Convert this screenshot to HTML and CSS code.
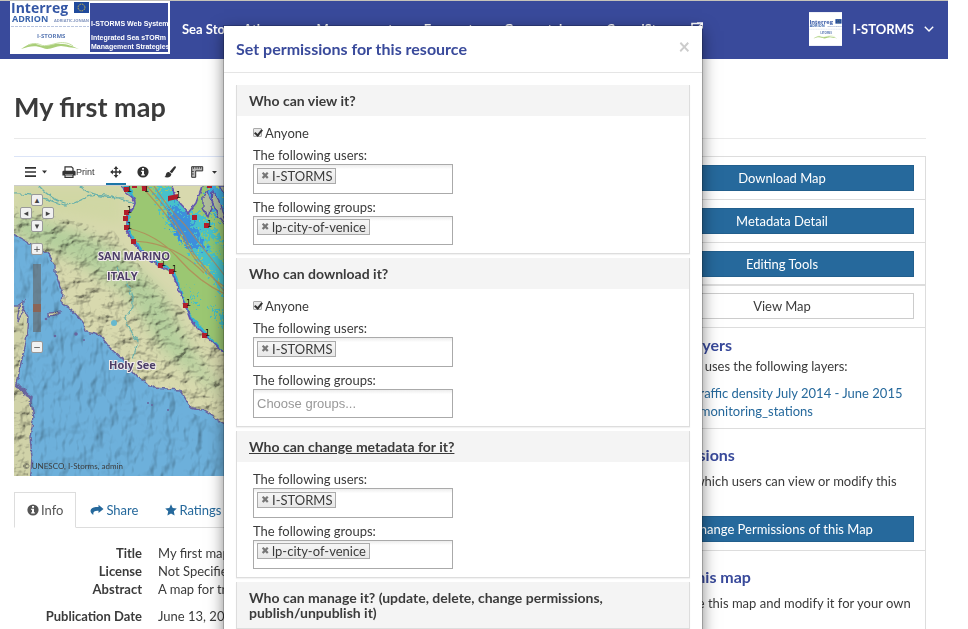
FILE: index.html
```html
<!DOCTYPE html>
<html lang="en">
<head>
<meta charset="utf-8">
<title>My first map</title>
<link rel="stylesheet" href="styles.css">
</head>
<body>
<svg class="sprite" aria-hidden="true">
  <symbol id="i-info" viewBox="0 0 12 12"><circle cx="6" cy="6" r="5.6" fill="currentColor"/><path d="M5 2h2v1.7H5zM4.2 4.7H7v3.6h.8v1.3H4.2V8.3H5V6h-.8z" fill="#fff"/></symbol>
  <symbol id="i-chev" viewBox="0 0 10 6"><path d="M.8.800L5 5 9.200.800" fill="none" stroke="currentColor" stroke-width="1.400"/></symbol>
  <symbol id="i-logo" viewBox="0 0 80 52">
    <rect width="80" height="52" fill="#fff"/>
    <text x="1" y="12" font-size="14" font-weight="700" fill="#3557a5">Interreg</text>
    <rect x="64" y="1" width="15" height="11" fill="#204a9c"/>
    <circle cx="71.500" cy="6.500" r="3.400" fill="none" stroke="#e9c93c" stroke-width="1" stroke-dasharray="1 .78"/>
    <text x="2" y="21" font-size="9" fill="#3b65ad">ADRION</text>
    <text x="44" y="21" font-size="4" fill="#8093bd">ADRIATIC-IONIAN</text>
    <path d="M1 25.500h78" stroke="#b9c5df" stroke-width="1" stroke-dasharray="3 1"/>
    <text x="27" y="37" font-size="6" fill="#5a79b4">I-STORMS</text>
    <path d="M11 48c6-4 11-7 18-4 8 3 14-2 21-1 8 0 12 2 19 5-8-2-13-2-18-3-6 0-12 5-18 2-8-3-13-2-22 1z" fill="#a9ce78"/>
    <path d="M18 44c5-2 9-2 13 0s12-1 17-2c6-1 11 0 15 3" fill="none" stroke="#c5dfa0"/>
  </symbol>
</svg>

<header class="topbar">
  <a class="brand" href="#" aria-label="I-STORMS Web System">
    <svg class="brand-logo" viewBox="0 0 80 52"><use href="#i-logo"/></svg>
    <span class="brand-text"><span>I-STORMS Web System</span><span>Integrated Sea sTORm<br>Management Strategies</span></span>
  </a>
  <nav class="menu">
    <a href="#">Sea Storm Atlas <svg class="chev" viewBox="0 0 10 6"><use href="#i-chev"/></svg></a>
    <a href="#">Management</a>
    <a href="#">Forecast</a>
    <a href="#">Geoportal <svg class="chev" viewBox="0 0 10 6"><use href="#i-chev"/></svg></a>
    <a href="#">CrowdStorms
      <svg class="ext" viewBox="0 0 12 12"><path d="M8.500 1.500H1v9.500h9V7M6 1h5.500v5.500M11 1.500L5 7.500" fill="none" stroke="currentColor" stroke-width="1.600"/></svg>
    </a>
  </nav>
  <a class="account" href="#">
    <svg class="avatar" viewBox="0 0 80 82"><rect width="80" height="82" fill="#fff"/><use href="#i-logo" y="16" width="80" height="52"/></svg>
    <span>I-STORMS</span>
    <svg class="chev" viewBox="0 0 10 6"><use href="#i-chev"/></svg>
  </a>
</header>

<main class="page">
  <h1>My first map</h1>
  <div class="columns">
    <div class="primary">
      <section class="viewer">
        <div class="toolbar">
          <button class="tool" aria-label="Layers"><svg viewBox="0 0 22 12"><path d="M0 1.800h11M0 6h11M0 10.200h11" stroke="currentColor" stroke-width="1.700"/><path d="M17 4.500h5L19.500 7.500z" fill="currentColor"/></svg></button>
          <button class="tool"><svg viewBox="0 0 14 12"><path d="M3 5V.800h6.500L11 2.300V5M3 9v2.400h8V9z" fill="#fff" stroke="currentColor" stroke-width="1.200"/><path d="M1.600 4.700h10.800q1.200 0 1.200 1.200v3.600H11V8.200H3v1.300H.4V5.900q0-1.200 1.200-1.200z" fill="currentColor"/></svg>Print</button>
          <button class="tool active" aria-label="Pan"><svg viewBox="0 0 14 14"><path d="M7 1v12M1 7h12" stroke="currentColor" stroke-width="1.700"/><path d="M7 .400l2.800 3H4.200zM7 13.600l2.800-3H4.200zM.4 7l3-2.800v5.600zM13.600 7l-3-2.800v5.600z" fill="currentColor"/></svg></button>
          <button class="tool" aria-label="Identify"><svg viewBox="0 0 12 12"><use href="#i-info"/></svg></button>
          <button class="tool" aria-label="Draw"><svg viewBox="0 0 14 14"><path d="M13.300.400q1 .6.300 2L9.300 8.600 6.500 6.600 11.600.900q.8-.9 1.700-.5zM5.800 7.100l2.800 2.200c0 3-3.200 5-8.300 3.500 2.400-.8 1.400-2.700 2.500-4.300.8-1.200 2-1.400 3-1.400z" fill="currentColor"/></svg></button>
          <button class="tool" aria-label="Measure"><svg viewBox="0 0 26 12"><path d="M.7.700h11v4.200h-7v6.400h-4z" fill="#bbb" stroke="currentColor" stroke-width="1"/><path d="M2.500 1v1.800M5 1v1.800M7.300 1v1.800M9.600 1v1.800M1 5.500h1.800M1 8h1.800" stroke="currentColor" stroke-width=".8"/><path d="M21 5h5l-2.500 2.800z" fill="currentColor"/></svg></button>
        </div>
        <div class="map">
          <svg class="terrain" viewBox="0 0 600 290" preserveAspectRatio="xMinYMin slice">
            <defs>
              <filter id="relief" x="0" y="0" width="100%" height="100%">
                <feTurbulence type="fractalNoise" baseFrequency=".07 .09" numOctaves="4" seed="8"/>
                <feDiffuseLighting surfaceScale="9" diffuseConstant="1.250" lighting-color="#fff"><feDistantLight azimuth="225" elevation="55"/></feDiffuseLighting>
                <feComposite in2="SourceGraphic" operator="in"/>
                <feGaussianBlur stdDeviation=".4"/>
              </filter>
              <filter id="swell" x="0" y="0" width="100%" height="100%">
                <feTurbulence type="fractalNoise" baseFrequency=".07 .04" numOctaves="3" seed="4"/>
                <feDiffuseLighting surfaceScale="9" diffuseConstant="1.200" lighting-color="#fff"><feDistantLight azimuth="225" elevation="57"/></feDiffuseLighting>
                <feComposite in2="SourceGraphic" operator="in"/>
                <feGaussianBlur stdDeviation=".6"/>
              </filter>
              <filter id="grain" x="-20%" y="-20%" width="140%" height="140%">
                <feTurbulence type="fractalNoise" baseFrequency=".3" numOctaves="3" seed="3" result="n"/>
                <feDisplacementMap in="SourceGraphic" in2="n" scale="26" xChannelSelector="R" yChannelSelector="G"/>
              </filter>
              <filter id="rough"><feTurbulence type="fractalNoise" baseFrequency=".18" numOctaves="2" seed="6"/><feDisplacementMap in="SourceGraphic" scale="5" xChannelSelector="R" yChannelSelector="G"/></filter>
              <filter id="soft"><feGaussianBlur stdDeviation="7"/></filter>
              <clipPath id="adriatic"><path d="M108 0C109 8 122 10 121 17 120 25 112 26 113 31V44L119 57 133 71 146 81 158 87 164 101 171 119 176 132 181 140 191 149 209 166 240 190H600V0H188L182 17 174 27 166 18 160 8 158 0z"/></clipPath>
            </defs>
            <rect width="600" height="290" fill="#d8d9ae"/>
            <g filter="url(#soft)"><path d="M0 25C40 40 80 45 115 75L150 110 175 160 215 215 150 165 110 105 60 75 0 50z" fill="#b4cf9c"/><path d="M0 0h110v40L0 20z" fill="#d0d7a4"/></g>
            <path d="M0 20 100 45 130 85 170 125 220 175V250H120L40 110 0 60z" filter="url(#relief)" class="shade"/>
            <g fill="none" stroke="#68b0aa" stroke-width="1.200" filter="url(#rough)"><path d="M0 8C20 7 31 13 46 18S70 6 92 9 108 18 121 16M25 0Q37 14 54 18M66 0Q77 12 110 12M103 82Q120 105 119 121L111 132 118 148 124 155 119 173"/></g>
            <circle cx="100" cy="137" r="3" fill="#66b8ce"/>
            <g class="sea" filter="url(#rough)">
              <path d="M-9 45 0 49 19 59 34 67 41 79V87L49 107 48 118 57 123 69 136 71 146 86 149 96 162 109 174 123 191 141 202 152 203 166 204 178 223 189 224 209 237 240 250V310H-9z"/>
              <path d="M-9 120H8L14 131 12 157 6 181 3 198 16 212 20 231 16 251 18 271 16 300H-9z" class="land"/>
              <path d="M6 118l4-3-1 12-6 8zM34 127l12-1-4 4-8 1z" class="land"/>
            </g>
            <path d="M0 52 19 62 33 70 39 87 46 107 46 120 66 136 70 149 84 152 96 166 107 177 123 194 141 205 164 207 178 227 209 240V290H19L22 230 5 200 14 157V125L0 110z" filter="url(#swell)" class="shade sea-shade"/>
            <path d="M-5 120 9 122 10 157 2 190 14 215 17 231 14 290H-5z" filter="url(#relief)" class="shade"/>
            <g fill="#68659f"><circle cx="32" cy="133" r="1.300"/><circle cx="41" cy="150" r="1.300"/><circle cx="62" cy="148" r="1.800"/><circle cx="70" cy="154" r="1"/><circle cx="134" cy="217" r="1"/><circle cx="138" cy="219" r="1"/><circle cx="154" cy="224" r="1"/></g>
            <path d="M2 200l8 3 2 6 5 3-1 4" fill="none" stroke="#68659f" stroke-width="3" filter="url(#rough)"/>
            <g clip-path="url(#adriatic)">
              <rect width="600" height="290" fill="#9bc772"/>
              <g filter="url(#grain)">
                <path d="M138 0h28l10 25 15 5 30 45V124L190 80 158 45z" fill="#47c1cb"/>
                <path d="M156 18l17 9 18 35-16 0-17-20z" fill="#3d8fdc"/>
                <path d="M190 15l24 25V0h-20z" fill="#42a9d9"/>
                <path d="M188 45l10 22 18 15V66z" fill="#8bc775"/>
                <path d="M195 120l25 14v18z" fill="#45bfc6"/>
                <path d="M176 100l7 16-2 6z" fill="#45bfc6"/>
              </g>
              <path d="M109 -2q17 13 5 30l1 18 16 24 28 15 15 43 35 39" fill="none" stroke="#31b2d4" stroke-width="3" filter="url(#rough)"/>
              <g fill="none" stroke="#b58253" stroke-width="1.200" opacity=".75"><path d="M127 0Q160 35 173 60T211 101M133 0Q163 32 180 68L211 106M140 0Q154 22 171 39L211 90M117 43Q145 50 165 73T211 108M119 55Q160 56 190 87"/></g>
            </g>
            <path d="M108 0C109 8 122 10 121 17 120 25 112 26 113 31V44L119 57 133 71 146 81 158 87 164 101 171 119 176 132 181 140 191 149 209 166M158 0l2 8 6 10 8 9 8-10 6-17" fill="none" stroke="#6457b0" stroke-width="1.600" filter="url(#rough)"/>
            <g fill="#b0bd9c" stroke="#5a4faa" stroke-width="1.300" filter="url(#rough)"><path d="M189 10l5-5 4 14-4 12-5-9zM199 5l8 14 7 24-9-12-7-16zM205 0h8v12z"/></g>
            <g fill="#b11e2b"><path d="M110 1h5v5h-5zM128 0h5v5h-5zM118 0h5v2h-5zM154 10l10-2v5l-10 2zM110 24h5v5h-5zM109 30h5v5h-5zM110 39h5v5h-5zM117 53h5v5h-5zM144 77h5v5h-5zM155 83h5v5h-5zM169 117h5v5h-5zM188 147h5v5h-5zM178 29h5v5h-5zM190 37h5v5h-5zM193 0h5v2h-5z"/></g>
            <g font-family="DejaVu Sans" font-size="8" fill="#202015"><text x="113" y="6">1</text><text x="130" y="6">1</text><text x="162" y="12">1</text><text x="113" y="27">1</text><text x="113" y="43">1</text><text x="147" y="80">1</text><text x="158" y="86">1</text><text x="172" y="120">1</text><text x="191" y="150">1</text><text x="193" y="41">1</text></g>
            <g class="places"><text x="84" y="74">SAN MARINO</text><text x="93" y="94">ITALY</text><text x="95" y="183">Holy See</text></g>
          </svg>
          <div class="map-controls">
            <button class="n" aria-label="Pan north">▴</button><button class="w" aria-label="Pan west">◂</button><button class="e" aria-label="Pan east">▸</button><button class="s" aria-label="Pan south">▾</button>
            <button class="in" aria-label="Zoom in">+</button>
            <input class="zoom" type="range" min="0" max="18" value="6" aria-label="Zoom level">
            <button class="out" aria-label="Zoom out">−</button>
          </div>
          <small class="credit">© UNESCO, I-Storms, admin</small>
        </div>
      </section>

      <nav class="tabs">
        <a class="current" href="#"><svg viewBox="0 0 12 12"><use href="#i-info"/></svg>Info</a>
        <a href="#"><svg viewBox="0 0 14 12"><path d="M8.500.800L13.500 5l-5 4V6.700C4.500 6.500 3 7.500 3.300 11 .8 9 0 7.300.9 5.400 2 3.400 4.500 3 8.500 3z" fill="currentColor"/></svg>Share</a>
        <a href="#"><svg viewBox="0 0 12 12"><path d="M6 .300l1.700 3.700 4.100.500-3 2.800.8 4.200L6 9.500l-3.600 2 .8-4.200-3-2.800L4.300 4z" fill="currentColor"/></svg>Ratings</a>
      </nav>
      <dl class="facts">
        <dt>Title</dt><dd>My first map</dd>
        <dt>License</dt><dd>Not Specified</dd>
        <dt>Abstract</dt><dd class="spaced">A map for training</dd>
        <dt>Publication Date</dt><dd>June 13, 2018</dd>
      </dl>
    </div>

    <aside class="side">
      <div class="item"><button class="btn">Download Map</button></div>
      <div class="item"><button class="btn">Metadata Detail</button></div>
      <div class="item"><button class="btn">Editing Tools</button></div>
      <div class="item view"><button class="btn plain">View Map</button></div>
      <div class="item">
        <h2>Map Layers</h2>
        <p>This map uses the following layers:</p>
        <ul><li><a href="#">Vessels traffic density July 2014 - June 2015</a></li><li><a href="#">iws_sea_monitoring_stations</a></li></ul>
      </div>
      <div class="item roomy">
        <h2>Permissions</h2>
        <p>Specify which users can view or modify this map</p>
        <button class="btn">Change Permissions of this Map</button>
      </div>
      <div class="item roomy">
        <h2>Copy this map</h2>
        <p>Duplicate this map and modify it for your own use</p>
      </div>
    </aside>
  </div>
</main>

<div class="overlay">
  <div class="dialog" role="dialog" aria-labelledby="dlg-title">
    <div class="dialog-head"><h2 id="dlg-title">Set permissions for this resource</h2><button class="close" aria-label="Close">×</button></div>
    <form class="dialog-body">
      <section class="panel">
        <h3>Who can view it?</h3>
        <div class="fields">
          <label class="check"><input type="checkbox" checked>Anyone</label>
          <label for="vu">The following users:</label>
          <div class="picker tall"><span class="chip"><button type="button" aria-label="Remove">✖</button>I-STORMS</span><input id="vu"></div>
          <label for="vg">The following groups:</label>
          <div class="picker"><span class="chip"><button type="button" aria-label="Remove">✖</button>lp-city-of-venice</span><input id="vg"></div>
        </div>
      </section>
      <section class="panel">
        <h3>Who can download it?</h3>
        <div class="fields">
          <label class="check"><input type="checkbox" checked>Anyone</label>
          <label for="du">The following users:</label>
          <div class="picker tall"><span class="chip"><button type="button" aria-label="Remove">✖</button>I-STORMS</span><input id="du"></div>
          <label for="dg">The following groups:</label>
          <div class="picker"><input id="dg" placeholder="Choose groups..."></div>
        </div>
      </section>
      <section class="panel">
        <h3 class="hovered">Who can change metadata for it?</h3>
        <div class="fields">
          <label for="mu">The following users:</label>
          <div class="picker tall"><span class="chip"><button type="button" aria-label="Remove">✖</button>I-STORMS</span><input id="mu"></div>
          <label for="mg">The following groups:</label>
          <div class="picker"><span class="chip"><button type="button" aria-label="Remove">✖</button>lp-city-of-venice</span><input id="mg"></div>
        </div>
      </section>
      <section class="panel"><h3>Who can manage it? (update, delete, change permissions, publish/unpublish it)</h3></section>
    </form>
  </div>
</div>
</body>
</html>
```
FILE: styles.css
```css
* { box-sizing: border-box; }
html { overflow: hidden; }
body { margin: 0; padding-right: 20px; background: #fff; color: #3b3b3b; font: 13px/18px Lato, "Open Sans", sans-serif; }
button, input { font: inherit; color: inherit; }
a { color: #26699c; text-decoration: none; }
h1, h2, h3, p, ul, dl, dd { margin: 0; padding: 0; }
.sprite { position: absolute; width: 0; height: 0; }
.sprite text, symbol text { font-family: "Open Sans", sans-serif; }

.topbar { display: flex; align-items: center; height: 59px; padding: 0 14px 2px 10px; background: #394a9b; border-top: 1px solid #c6c3ba; color: #fff; overflow: hidden; }
.topbar a { color: #fff; font-weight: 700; }
.brand { display: flex; width: 160px; height: 53px; margin-bottom: 3px; background: #fff; flex: none; }
.brand-logo { width: 80px; height: 52px; }
.brand-text { display: flex; flex-direction: column; justify-content: flex-end; gap: 5px; flex: 1; min-width: 0; margin: 2px 2px 2px 0; padding: 0 0 1px 1px; background: #394a9b; font: 700 7px/9px "Liberation Sans", Arial, sans-serif; white-space: nowrap; }
.menu { display: flex; gap: 31px; margin-left: 12px; white-space: nowrap; }
.ext { width: 12px; height: 12px; margin-left: 3px; }
.account { display: flex; align-items: center; gap: 10px; margin-left: auto; }
.avatar { width: 33px; height: 34px; }
.chev { width: 10px; height: 6px; }

.page { padding: 30px 22px 0 14px; }
h1 { padding-bottom: 13px; border-bottom: 1px solid #e9e9e9; font-size: 27px; line-height: 36px; }
.columns { display: flex; gap: 24px; margin-top: 17px; align-items: flex-start; }
.primary { flex: 1; min-width: 0; }

.toolbar { display: flex; align-items: stretch; gap: 7px; height: 30px; padding: 0 7px; border-top: 1px solid #dbe4f7; border-bottom: 1px solid #ccc; }
.tool { display: flex; align-items: center; padding: 3px 4px 0; border: 0; border-bottom: 2px solid transparent; background: none; color: #333; font: 9px/12px "Liberation Sans", Arial, sans-serif; }
.tool svg { height: 12px; }
.tool.active { border-color: #1c76a8; }
.map { position: relative; height: 290px; background: #64a6d3; overflow: hidden; }
.terrain { display: block; width: 100%; height: 100%; }
.sea path { fill: #6db0db; stroke: #68659f; stroke-width: 1.4px; }
.sea .land { fill: #d0d2a8; }
.shade { mix-blend-mode: multiply; opacity: .45; }
.sea-shade { opacity: .35; }
.places text { font: 700 11px "Open Sans", sans-serif; fill: #4b3d66; stroke: #f2ecec; stroke-width: 2px; paint-order: stroke; }
.map-controls button { position: absolute; display: grid; place-items: center; width: 12px; height: 12px; padding: 0; border: 1px solid #999; border-radius: 2px; background: #f1f1f1; color: #444; font: 9px/9px "DejaVu Sans", sans-serif; }
.map-controls .n { left: 17px; top: 8px; }
.map-controls .w { left: 6px; top: 21px; }
.map-controls .e { left: 28px; top: 21px; }
.map-controls .s { left: 17px; top: 34px; }
.map-controls .in { left: 17px; top: 57px; }
.map-controls .out { left: 17px; top: 155px; }
.zoom { position: absolute; left: 19px; top: 78px; width: 8px; height: 68px; margin: 0; appearance: none; writing-mode: vertical-lr; direction: rtl; background: rgba(100, 100, 100, .6); }
.zoom::-webkit-slider-thumb { appearance: none; width: 8px; height: 8px; background: #8b6557; }
.credit { position: absolute; left: 9px; bottom: 3px; font-size: 8px; line-height: 14px; }

.tabs { display: flex; gap: 1px; margin-top: 16px; border-bottom: 1px solid #ddd; }
.tabs a { display: flex; align-items: center; gap: 2px; height: 36px; margin-bottom: -1px; padding: 0 12px; border: 1px solid transparent; }
.tabs .current { background: #fff; border-color: #ddd #ddd #fff; color: #555; }
.tabs svg { height: 12px; }
.facts { display: grid; grid-template-columns: 128px 1fr; column-gap: 16px; margin-top: 16px; }
.facts dt { font-weight: 700; text-align: right; }
.facts .spaced { margin-bottom: 9px; }

.side { width: 288px; flex: none; border: 1px solid #ddd; border-top: 0; }
.item { padding: 8px 11px; border-top: 1px solid #ddd; }
.btn { display: block; width: 100%; height: 26px; padding: 0; border: 1px solid #225f8d; background: #26699c; color: #fff; }
.btn.plain { background: #fff; border-color: #ccc; color: #3b3b3b; }
.side .view { padding-top: 7px; box-shadow: 0 -1px #ddd; }
.side h2, .dialog h2 { color: #394a9b; font-size: 16px; line-height: 18px; }
.side h2 { margin-bottom: 3px; }
.side ul { list-style: none; margin-top: 9px; white-space: nowrap; }
.item.roomy h2 { margin: 9px 0 8px; }
.roomy .btn { margin-top: 8px; }

.overlay { position: fixed; inset: 0; display: flex; justify-content: center; align-items: flex-start; padding: 26px 42px 26px 0; overflow: hidden; }
.dialog { width: 478px; background: #fff; box-shadow: 0 0 0 1px rgba(0, 0, 0, .2), 0 5px 15px rgba(0, 0, 0, .5); }
.dialog-head { display: flex; justify-content: space-between; align-items: center; height: 47px; padding: 0 12px; border-bottom: 1px solid #e5e5e5; }
.close { padding: 0; border: 0; background: none; color: #ccc; font-weight: 700; font-size: 20px; line-height: 20px; margin-bottom: 6px; }
.dialog-body { padding: 12px; }
.panel { margin-bottom: 4px; border: 1px solid #ddd; border-top: 0; box-shadow: 0 1px 1px rgba(0, 0, 0, .05); }
.panel h3 { padding: 8px 12px; background: #f4f4f4; font-size: 14px; line-height: 15px; }
.panel .hovered { text-decoration: underline; }
.fields { padding: 8px 16px; }
.fields label { display: block; }
.fields .check { display: flex; align-items: center; gap: 3px; margin: 0 0 4px; }
.check input { position: relative; width: 9px; height: 9px; margin: 0 0 2px; appearance: none; border: 1px solid #aaa; border-radius: 1px; background: #e8e8e8; }
.check input:checked::after { content: ""; position: absolute; left: 2px; top: -1px; width: 3px; height: 6px; border: solid #333; border-width: 0 2px 2px 0; transform: rotate(40deg); }
.picker { display: flex; align-items: flex-start; width: 200px; height: 29px; padding: 2px 3px; border: 1px solid #aaa; background: linear-gradient(#eee 1%, #fff 15%); }
.picker.tall { height: 30px; margin-bottom: 4px; padding-top: 3px; }
.picker > input { flex: 1; min-width: 0; height: 22px; padding: 0; border: 0; outline: 0; background: none; font-family: "Liberation Sans", Arial, sans-serif; }
.picker > input::placeholder { color: #999; }
.chip { display: flex; align-items: center; height: 16px; padding: 0 3px; border: 1px solid #aaa; background: linear-gradient(#f4f4f4 20%, #eee 50%, #e8e8e8); white-space: nowrap; }
.chip button { width: 8px; margin-right: 3px; padding: 0; border: 0; background: none; color: #777; font: 10px/14px "DejaVu Sans", sans-serif; }
```
